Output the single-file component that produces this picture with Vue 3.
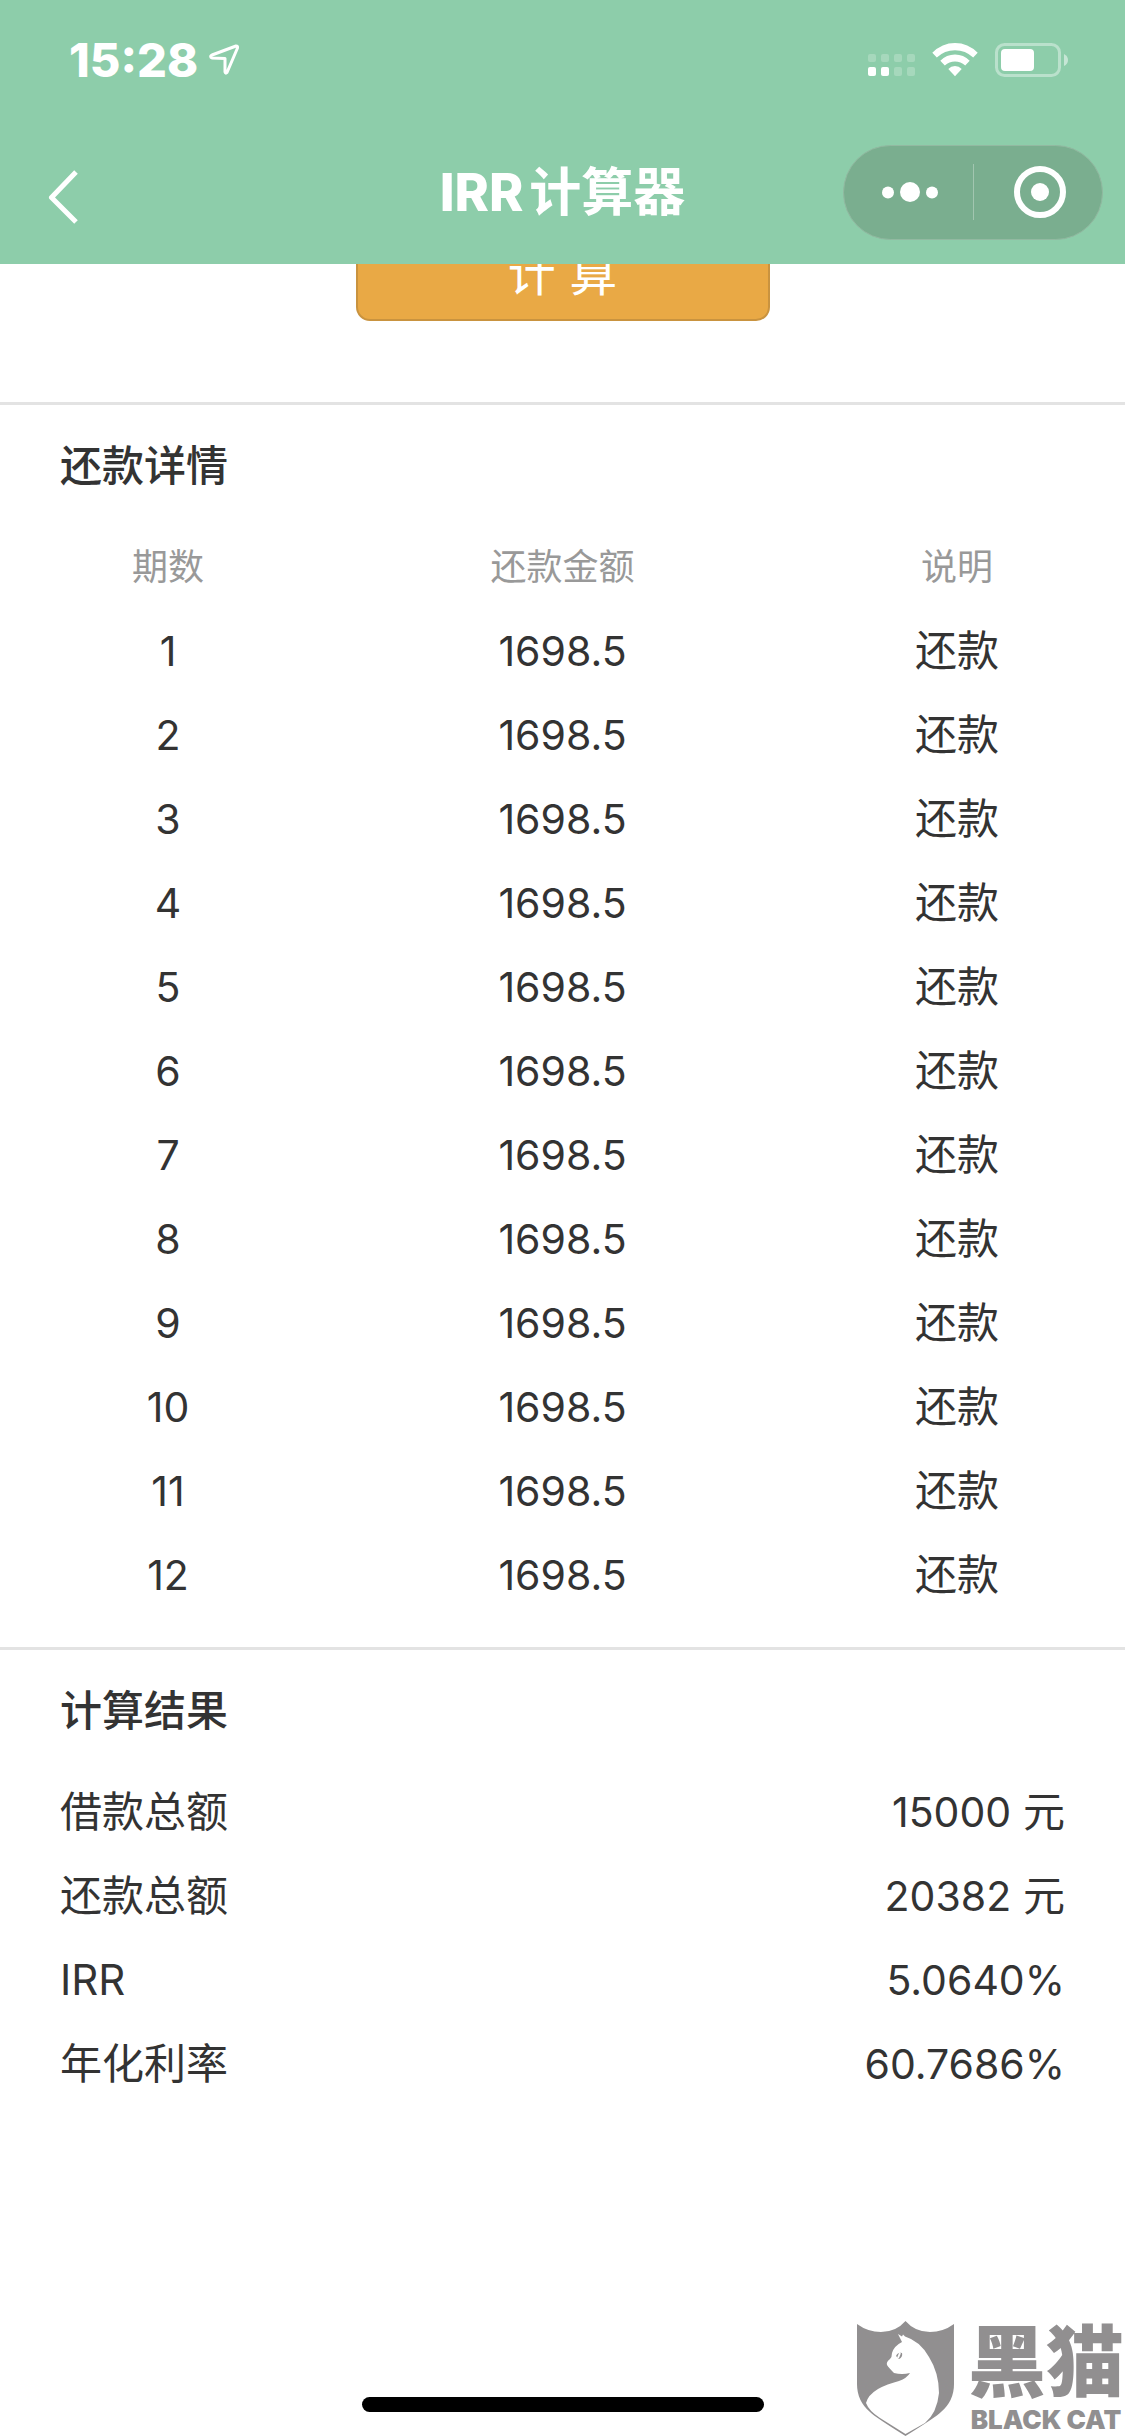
<template>
  <div class="page">
    <header class="header">
      <div class="status-bar">
        <div class="status-left">
          <span class="time">15:28</span>
          <svg class="icon-location" width="32" height="34" viewBox="0 0 32 34" aria-hidden="true">
            <path d="M3 14.5 Q2 13 4 12 L28 3 Q30 3 29.5 5 L19 29.5 Q17.5 31 17 29 L17 15.5 L4 15 Z" />
          </svg>
        </div>
        <div class="status-right">
          <svg width="50" height="34" viewBox="0 0 50 34" aria-hidden="true">
            <rect
              v-for="dot in signalDots"
              :key="dot.id"
              :x="dot.x"
              :y="dot.y"
              width="8"
              :height="dot.height"
              rx="2"
              fill="#fff"
              :fill-opacity="dot.active ? 1 : 0.22"
            />
          </svg>
          <svg width="46" height="34" viewBox="0 0 46 34" aria-hidden="true">
            <g fill="#fff">
              <path d="M0.3 9.8 Q10 0 23 0 Q36 0 45.7 9.8 L41.2 14.5 Q33.5 7.2 23 7.2 Q12.5 7.2 4.8 14.5 Z" />
              <path d="M8.3 17.8 Q14.5 11.6 23 11.6 Q31.5 11.6 37.7 17.8 L33.2 22.6 Q28.8 18.6 23 18.6 Q17.2 18.6 12.8 22.6 Z" />
              <path d="M16.3 26 Q19 23 23 23 Q27 23 29.7 26 L23 33.2 Z" />
            </g>
          </svg>
          <svg width="74" height="34" viewBox="0 0 74 34" aria-hidden="true">
            <rect x="1.5" y="1.5" width="63" height="31" rx="8" fill="none" stroke="#fff" stroke-opacity="0.4" stroke-width="3" />
            <rect x="6" y="6" width="33" height="22" rx="4" fill="#fff" />
            <path d="M69 11 Q73 13 73 17 Q73 21 69 23 Z" fill="#fff" fill-opacity="0.5" />
          </svg>
        </div>
      </div>

      <div class="nav-bar">
        <button class="back" type="button" aria-label="返回">
          <svg width="32" height="64" viewBox="0 0 32 64" aria-hidden="true">
            <path d="M28 12 L3.5 37.5 L28 62" fill="none" stroke="#fff" stroke-width="5" stroke-linejoin="round" />
          </svg>
        </button>
        <h1 class="title"><span class="title-latin">IRR</span>计算器</h1>
        <div class="capsule">
          <button type="button" aria-label="更多">
            <svg width="58" height="22" viewBox="0 0 58 22" aria-hidden="true">
              <g fill="#fff">
                <circle cx="7" cy="11.5" r="6" />
                <circle cx="29" cy="11" r="10" />
                <circle cx="51" cy="11.5" r="6" />
              </g>
            </svg>
          </button>
          <span class="capsule-line"></span>
          <button type="button" aria-label="关闭">
            <svg width="52" height="52" viewBox="0 0 52 52" aria-hidden="true">
              <circle cx="26" cy="26" r="23" fill="none" stroke="#fff" stroke-width="6" />
              <circle cx="26" cy="26" r="9" fill="#fff" />
            </svg>
          </button>
        </div>
      </div>
    </header>

    <main class="content">
      <div class="action">
        <button class="calc-button" type="button">计&nbsp;算</button>
      </div>

      <section class="section">
        <h2 class="section-title">还款详情</h2>
        <table class="detail-table">
          <thead>
            <tr>
              <th class="narrow">期数</th>
              <th>还款金额</th>
              <th class="narrow">说明</th>
            </tr>
          </thead>
          <tbody>
            <tr v-for="item in payments" :key="item.period">
              <td class="latin">{{ item.period }}</td>
              <td class="latin">{{ item.amount }}</td>
              <td>{{ item.note }}</td>
            </tr>
          </tbody>
        </table>
      </section>

      <section class="section">
        <h2 class="section-title">计算结果</h2>
        <dl class="results">
          <div v-for="result in results" :key="result.label" class="result-row">
            <dt>{{ result.label }}</dt>
            <dd>
              <span class="latin">{{ result.value }}</span>
              <template v-if="result.unit">&nbsp;{{ result.unit }}</template>
            </dd>
          </div>
        </dl>
      </section>
    </main>

    <div class="home-indicator"></div>

    <div class="watermark">
      <svg width="97" height="115" viewBox="0 0 97 115" aria-hidden="true">
        <path
          fill="#918f90"
          d="M0 3 Q11 11 24 11 Q39 11 48.5 0 Q58 11 73 11 Q86 11 97 3 L97 63 Q97 80 84 91 Q79 96 48.5 115 Q18 96 13 91 Q0 80 0 63 Z"
        />
        <path
          fill="#fff"
          d="M41 13 L45 15.5 L46 13.5 L48 15.5 Q63 20 72 36 Q82 52 82 72 Q80 92 68 102 L48.5 113 L23 97 Q12 90 9 82 Q11 74 21 68 Q30 63 42 60 Q50 57 53 52 Q45 54 37 52 Q32 47 30 44 Q29 41 33 38 Q35 36 35 32 Q37 25 45 21 Z"
        />
        <path d="M39 35 Q41 31 45 32 Q46 36 42 38 Z" fill="#918f90" />
        <path d="M41 37 L43 32" stroke="#fff" stroke-width="2" />
      </svg>
      <div class="watermark-text">
        <span class="watermark-cn">黑猫</span>
        <span class="watermark-en">BLACK CAT</span>
      </div>
    </div>
  </div>
</template>

<script setup>
// 信号点：上下两行，每行四个
const signalDots = Array.from({ length: 8 }, (_, i) => ({
  id: i,
  x: 3 + (i % 4) * 13,
  y: i < 4 ? 11 : 24,
  height: i < 4 ? 8 : 9,
  active: i === 4 || i === 5
}))

const payments = Array.from({ length: 12 }, (_, i) => ({
  period: i + 1,
  amount: 1698.5,
  note: '还款'
}))

const results = [
  { label: '借款总额', value: '15000', unit: '元' },
  { label: '还款总额', value: '20382', unit: '元' },
  { label: 'IRR', value: '5.0640%' },
  { label: '年化利率', value: '60.7686%' }
]
</script>

<style>
body {
  margin: 0;
  background-color: #fff;
}
</style>

<style scoped>
.page {
  position: relative;
  display: flex;
  flex-direction: column;
  min-height: 100vh;
  overflow: hidden;
  background-color: #fff;
  color: #333;
  font-family: Inter, 'Noto Sans CJK SC', sans-serif;
  font-size: 42px;
}

button {
  margin: 0;
  padding: 0;
  border: none;
  background: none;
  font-family: inherit;
  cursor: pointer;
}

svg {
  display: block;
  flex: none;
}

.latin {
  font-size: 41px;
}

/* Header */
.header {
  position: sticky;
  top: 0;
  z-index: 2;
  background-color: #8dcdaa;
  color: #fff;
}

.status-bar {
  display: flex;
  align-items: center;
  justify-content: space-between;
  height: 120px;
  padding: 0 56px 0 69px;
}

.status-left {
  display: flex;
  align-items: center;
  gap: 10px;
}

.time {
  font-size: 47px;
  font-weight: 800;
  line-height: 54px;
}

.icon-location path {
  fill: none;
  stroke: #fff;
  stroke-width: 3;
  stroke-linejoin: round;
}

.status-right {
  display: flex;
  align-items: center;
  gap: 17px;
}

.nav-bar {
  display: grid;
  grid-template-columns: 1fr auto 1fr;
  align-items: center;
  height: 144px;
  padding: 0 22px;
}

.nav-bar .back {
  justify-self: start;
  padding-left: 26px;
}

.title {
  margin: 0;
  padding-top: 2px;
  font-size: 52px;
  font-weight: 700;
  line-height: 72px;
}

.title-latin {
  margin-right: 6px;
  font-weight: 800;
}

.capsule {
  display: flex;
  align-items: center;
  justify-self: end;
  box-sizing: border-box;
  width: 260px;
  height: 95px;
  border: 1px solid #92b9a1;
  border-radius: 48px;
  background-color: #7aae8f;
}

.capsule button {
  display: flex;
  flex: 1;
  align-items: center;
  justify-content: center;
  height: 100%;
  padding-left: 4px;
}

.capsule-line {
  width: 1px;
  height: 56px;
  background-color: #a2c6b0;
}

/* Content */
.content {
  flex: 1;
  margin-top: -37px;
}

.action {
  display: flex;
  justify-content: center;
  padding-bottom: 81px;
}

.calc-button {
  box-sizing: border-box;
  width: 414px;
  height: 94px;
  border: 2px solid #c9933f;
  border-radius: 14px;
  background-color: #e9a945;
  color: #fff;
  font-size: 48px;
  line-height: 90px;
}

.section {
  padding: 0 60px 30px;
  border-top: 3px solid #e3e3e3;
}

.section-title {
  margin: 0;
  padding-top: 2px;
  font-size: 42px;
  font-weight: 500;
  line-height: 118px;
}

.detail-table {
  width: 100%;
  border-collapse: collapse;
  table-layout: fixed;
  text-align: center;
}

.detail-table th,
.detail-table td {
  height: 84px;
  padding: 0;
  line-height: 60px;
}

.detail-table th {
  color: #999;
  font-size: 36px;
  font-weight: 400;
}

.detail-table .narrow {
  width: 21.5%;
}

.results {
  margin: 0;
}

.result-row {
  display: flex;
  align-items: center;
  justify-content: space-between;
  height: 84px;
  line-height: 60px;
}

.result-row dd {
  margin: 0;
}

/* Bottom */
.home-indicator {
  align-self: center;
  width: 402px;
  height: 15px;
  margin-bottom: 24px;
  border-radius: 8px;
  background-color: #000;
}

.watermark {
  position: absolute;
  right: 1px;
  bottom: 0;
  display: flex;
  gap: 14px;
  color: #918f90;
}

.watermark-text {
  display: flex;
  flex-direction: column;
  align-items: center;
}

.watermark-cn {
  font-size: 78px;
  font-weight: 900;
  line-height: 84px;
}

.watermark-en {
  font-size: 26px;
  font-weight: 900;
  line-height: 30px;
}
</style>
